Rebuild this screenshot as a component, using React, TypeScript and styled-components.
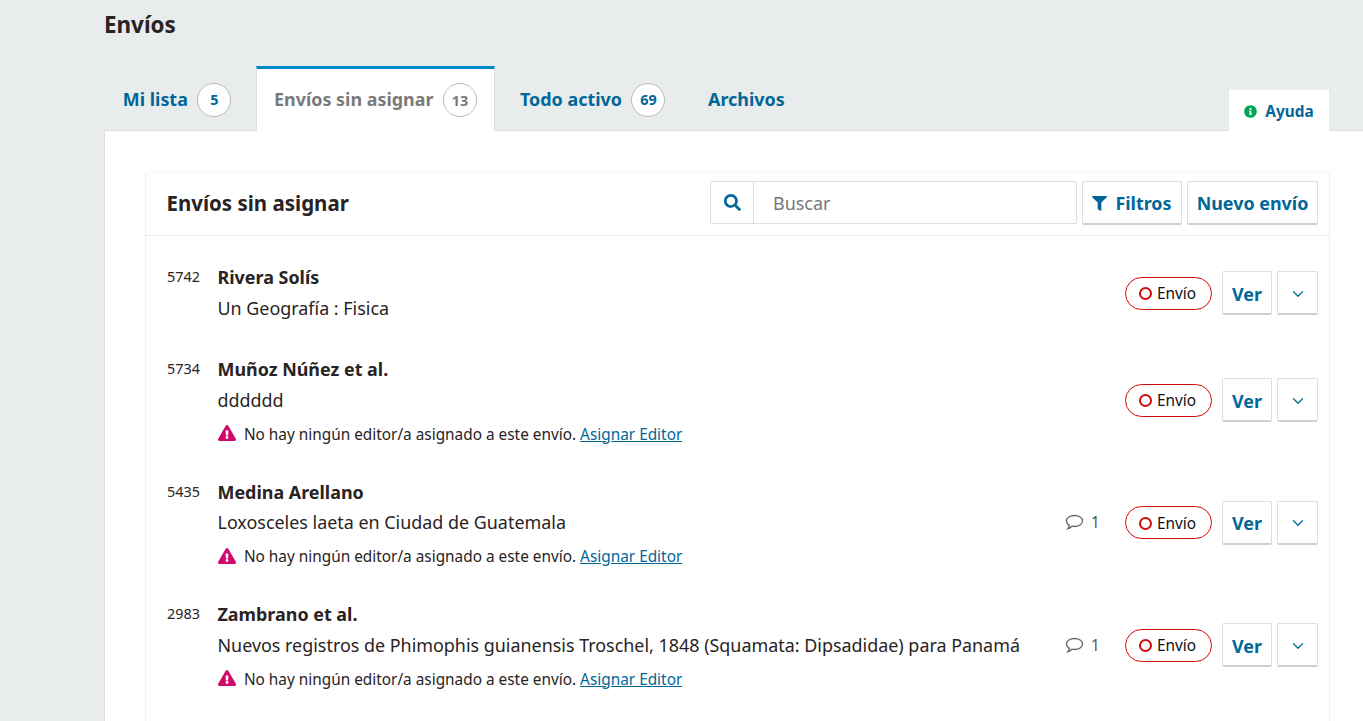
import React from "react";
import styled, { createGlobalStyle } from "styled-components";
import { FaSearch, FaFilter, FaInfoCircle, FaExclamationTriangle } from "react-icons/fa";
import { ChevronDown } from "lucide-react";

const Global = createGlobalStyle`
  html, body { margin: 0; padding: 0; height: 100%; overflow: hidden; }
  body { background: #e9eced; font-family: "Noto Sans", sans-serif; color: rgba(0,0,0,0.87); }
`;

const Page = styled.div`
  height: 721px;
  overflow: hidden;
  padding-left: 104px;
`;
const Heading = styled.h1`
  margin: 0;
  height: 66px;
  padding-top: 10px;
  box-sizing: border-box;
  font-size: 22.4px;
  line-height: 30px;
  font-weight: 700;
  color: #2a2323;
`;
const TabBar = styled.div`
  display: flex;
  align-items: stretch;
  height: 64px;
  position: relative;
`;
const Tab = styled.a<{ $active?: boolean; $w: number; $pad: number }>`
  display: flex;
  align-items: center;
  gap: 9.5px;
  width: ${p => p.$w}px;
  box-sizing: border-box;
  padding: ${p => (p.$active ? 0 : 3)}px 0 0 ${p => p.$pad}px;
  font-size: 17.92px;
  font-weight: 700;
  color: ${p => (p.$active ? "#7a7a7a" : "#006798")};
  background: ${p => (p.$active ? "#fff" : "transparent")};
  border-top: ${p => (p.$active ? "3px solid #008acb" : "none")};
  border-left: ${p => (p.$active ? "1px solid #ddd" : "none")};
  border-right: ${p => (p.$active ? "1px solid #ddd" : "none")};
  position: relative;
  z-index: 1;
  margin-bottom: ${p => (p.$active ? -1 : 0)}px;
`;
const TabLabel = styled.span`
  margin-top: -2px;
`;
const Badge = styled.span<{ $active?: boolean }>`
  display: inline-flex;
  align-items: center;
  justify-content: center;
  width: 34px;
  height: 34px;
  box-sizing: border-box;
  border: 1px solid #bbb;
  border-radius: 50%;
  background: #fff;
  font-size: 14.4px;
  font-weight: 700;
  color: ${p => (p.$active ? "#7a7a7a" : "#006798")};
`;
const HelpTab = styled.a`
  position: absolute;
  left: 1125px;
  bottom: -1px;
  width: 100px;
  height: 41px;
  box-sizing: border-box;
  padding-top: 1px;
  background: #fff;
  display: flex;
  align-items: center;
  justify-content: center;
  gap: 8px;
  font-size: 15.36px;
  font-weight: 700;
  color: #006798;
  z-index: 1;
  svg { color: #00a651; }
`;
const Panel = styled.main`
  background: #fff;
  border-top: 1px solid #ddd;
  border-left: 1px solid #ddd;
  padding: 41px 33px 0 40px;
  height: 600px;
  box-sizing: border-box;
`;
const ListPanel = styled.section`
  border: 1px solid #eee;
  border-top-color: #f6f6f6;
  border-bottom: none;
  border-radius: 2px 2px 0 0;
  min-height: 560px;
`;
const ListHeader = styled.header`
  display: flex;
  align-items: center;
  height: 63px;
  box-sizing: border-box;
  padding: 0 11px 3px 20.5px;
  border-bottom: 1px solid #eee;
`;
const ListTitle = styled.h2`
  margin: 0;
  flex: 1;
  font-size: 20.48px;
  font-weight: 700;
  color: #2a2323;
`;
const Search = styled.div`
  display: flex;
  width: 367px;
  height: 43px;
  box-sizing: border-box;
  border: 1px solid #ddd;
  border-radius: 2px;
  margin-right: 5px;
`;
const SearchIcon = styled.span`
  width: 43px;
  box-sizing: border-box;
  padding-left: 1px;
  display: flex;
  align-items: center;
  justify-content: center;
  border-right: 1px solid #ddd;
  color: #006798;
  font-size: 17px;
`;
const Placeholder = styled.span`
  padding-left: 19px;
  display: flex;
  align-items: center;
  font-size: 17.92px;
  color: #777;
`;
const Button = styled.button<{ $w: number; $left?: number }>`
  display: flex;
  align-items: center;
  justify-content: center;
  gap: 8px;
  width: ${p => p.$w}px;
  height: 44px;
  box-sizing: border-box;
  padding: 2px 0 0;
  margin-left: ${p => p.$left ?? 0}px;
  background: #fff;
  border: 1px solid #ddd;
  border-bottom: 2px solid #d0d0d0;
  border-radius: 2px;
  font-family: inherit;
  font-size: 17.92px;
  font-weight: 700;
  color: #006798;
  svg { flex: none; }
`;
const Rows = styled.div`
  padding-top: 11px;
`;
const Row = styled.article`
  display: flex;
  align-items: center;
  padding: 18px 11px 18px 21px;
`;
const Id = styled.span`
  width: 50.5px;
  flex: none;
  align-self: flex-start;
  font-size: 14.4px;
  line-height: 24px;
  color: #2a2323;
`;
const Body = styled.div`
  flex: 1;
  min-width: 0;
  padding-bottom: 1.25px;
`;
const Name = styled.div`
  font-size: 17.92px;
  line-height: 24px;
  font-weight: 700;
  color: #2a2323;
`;
const Title = styled.div`
  font-size: 17.92px;
  line-height: 24px;
  margin-top: 6.75px;
  color: #2a2323;
`;
const Note = styled.div`
  display: flex;
  align-items: center;
  gap: 8.4px;
  height: 16px;
  margin-top: 14.5px;
  font-size: 15.36px;
  color: #2a2323;
  svg { color: #d00a6c; flex: none; margin-top: -2px; }
  a { color: #006798; text-decoration: underline; }
`;
const Comments = styled.span`
  display: flex;
  align-items: center;
  gap: 7px;
  width: 60px;
  font-size: 15.36px;
  color: #555;
`;
const Status = styled.span`
  display: flex;
  align-items: center;
  gap: 5px;
  width: 87px;
  height: 33px;
  box-sizing: border-box;
  padding: 1px 0 0 13px;
  border: 1px solid #d00a0a;
  border-radius: 17px;
  font-size: 15.36px;
  color: #111;
  margin-right: 10px;
`;
const Ring = styled.span`
  width: 13px;
  height: 13px;
  box-sizing: border-box;
  border: 2.5px solid #d00a0a;
  border-radius: 50%;
`;

const CommentIcon = () => (
  <svg width="19" height="17" viewBox="0 0 19 17" fill="none" stroke="#5f6b73" strokeWidth="1.3">
    <path d="M9.5 1.5c4.4 0 8 2.4 8 5.500s-3.600 5.500-8 5.500c-.9 0-1.800-.1-2.600-.3-.9 1-2.300 2-4 2.500.8-.9 1.300-2 1.400-3.300C2.600 10.400 1.500 8.800 1.500 7c0-3.100 3.600-5.500 8-5.500z" />
  </svg>
);

type Item = { id: number; name: string; title: string; comments?: number; note?: boolean };
const items: Item[] = [
  { id: 5742, name: "Rivera Solís", title: "Un Geografía : Fisica" },
  { id: 5734, name: "Muñoz Núñez et al.", title: "dddddd", note: true },
  { id: 5435, name: "Medina Arellano", title: "Loxosceles laeta en Ciudad de Guatemala", comments: 1, note: true },
  { id: 2983, name: "Zambrano et al.", title: "Nuevos registros de Phimophis guianensis Troschel, 1848 (Squamata: Dipsadidae) para Panamá", comments: 1, note: true },
];

export default function App() {
  return (
    <Page>
      <Global />
      <Heading>Envíos</Heading>
      <TabBar>
        <Tab $w={152} $pad={18.8}><TabLabel>Mi lista</TabLabel> <Badge>5</Badge></Tab>
        <Tab $active $w={239} $pad={17}><TabLabel>Envíos sin asignar</TabLabel> <Badge $active>13</Badge></Tab>
        <Tab $w={189} $pad={25}><TabLabel>Todo activo</TabLabel> <Badge>69</Badge></Tab>
        <Tab $w={120} $pad={24}><TabLabel>Archivos</TabLabel></Tab>
        <HelpTab><FaInfoCircle size={13} /> Ayuda</HelpTab>
      </TabBar>
      <Panel>
        <ListPanel>
          <ListHeader>
            <ListTitle>Envíos sin asignar</ListTitle>
            <Search>
              <SearchIcon><FaSearch /></SearchIcon>
              <Placeholder>Buscar</Placeholder>
            </Search>
            <Button $w={100}><FaFilter size={15} /> Filtros</Button>
            <Button $w={131} $left={5}>Nuevo envío</Button>
          </ListHeader>
          <Rows>
            {items.map(it => (
              <Row key={it.id}>
                <Id>{it.id}</Id>
                <Body>
                  <Name>{it.name}</Name>
                  <Title>{it.title}</Title>
                  {it.note && (
                    <Note>
                      <FaExclamationTriangle size={18} />
                      <span>No hay ningún editor/a asignado a este envío. <a>Asignar Editor</a></span>
                    </Note>
                  )}
                </Body>
                {it.comments && <Comments><CommentIcon /> {it.comments}</Comments>}
                <Status><Ring /> Envío</Status>
                <Button $w={50}>Ver</Button>
                <Button $w={41} $left={5}><ChevronDown size={18} strokeWidth={1.6} /></Button>
              </Row>
            ))}
          </Rows>
        </ListPanel>
      </Panel>
    </Page>
  );
}
